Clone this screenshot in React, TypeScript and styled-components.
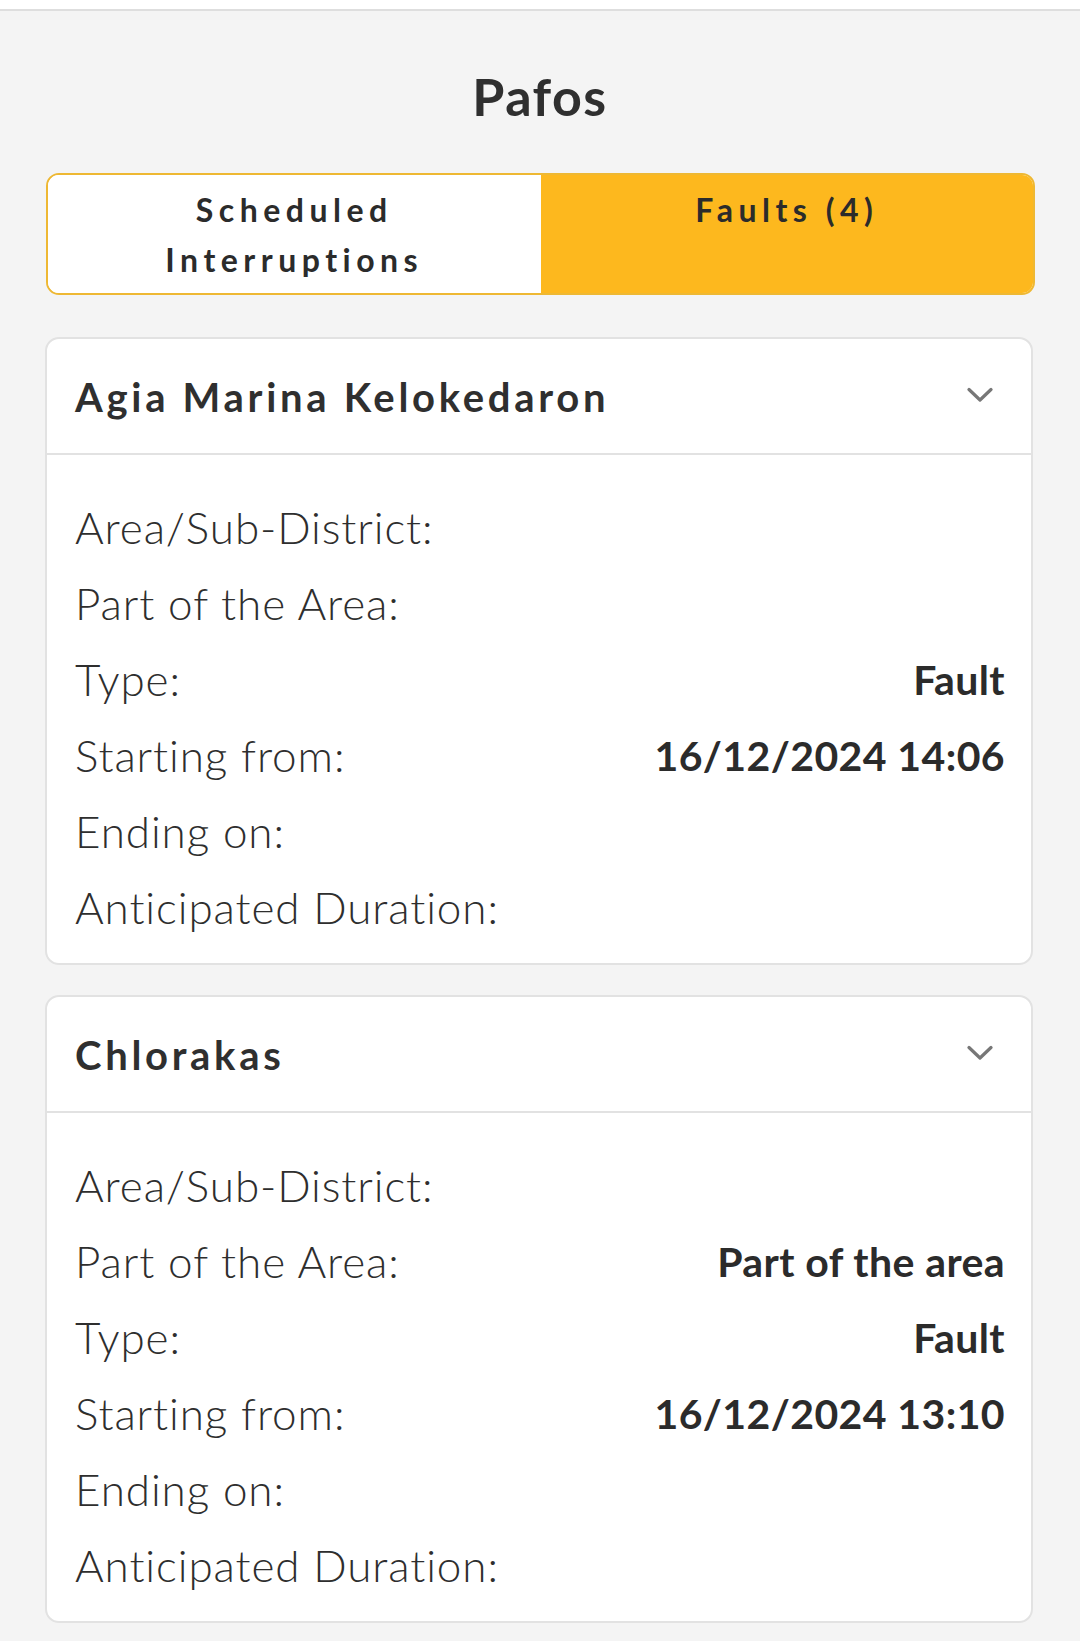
import React from "react";
import styled, { createGlobalStyle } from "styled-components";

const GlobalStyle = createGlobalStyle`
  html, body {
    margin: 0;
    padding: 0;
    background: #f4f4f4;
  }
  body {
    font-family: Lato, "Open Sans", sans-serif;
    color: #333333;
  }
`;

const Page = styled.div`
  width: 1080px;
  min-height: 1641px;
  background: #f4f4f4;
  display: flex;
  flex-direction: column;
`;

const TopStrip = styled.div`
  height: 9px;
  background: #ffffff;
  border-bottom: 2px solid #dedede;
`;

const Title = styled.h1`
  margin: 55px 0 47px;
  font-family: Lato, sans-serif;
  font-weight: 700;
  font-size: 52px;
  line-height: 60px;
  letter-spacing: 1.5px;
  text-align: center;
  color: #2f2f2f;
`;

const Tabs = styled.div`
  margin: 0 45px 0 46px;
  height: 122px;
  display: grid;
  grid-template-columns: 1fr 1fr;
  border: 2px solid #eeb833;
  border-radius: 13px;
  overflow: hidden;
  box-sizing: border-box;
  background: #ffffff;
`;

const Tab = styled.div<{ $active?: boolean }>`
  background: ${(p) => (p.$active ? "#fdb81e" : "#ffffff")};
  padding-top: 10px;
  text-align: center;
  font-family: Lato, sans-serif;
  font-weight: 700;
  font-size: 32px;
  line-height: 50px;
  letter-spacing: 5.5px;
  color: #2b2b2b;
`;

const List = styled.div`
  margin: 42px 47px 0 45px;
  display: flex;
  flex-direction: column;
  gap: 30px;
`;

const Card = styled.section`
  background: #ffffff;
  border: 2px solid #e2e2e2;
  border-radius: 14px;
  overflow: hidden;
`;

const CardHeader = styled.div`
  height: 116px;
  padding: 2px 38px 0 28px;
  box-sizing: border-box;
  display: flex;
  align-items: center;
  justify-content: space-between;
  border-bottom: 2px solid #e2e2e2;
`;

const CardTitle = styled.h2`
  margin: 0;
  font-family: Lato, sans-serif;
  font-weight: 700;
  font-size: 40px;
  line-height: 50px;
  letter-spacing: 3.7px;
  color: #2f2f2f;
`;

const Chevron = styled.svg`
  width: 26px;
  height: 16px;
  flex: none;
  margin-top: -4px;
`;

const CardBody = styled.div`
  padding: 34px 26px 18px 28px;
  display: flex;
  flex-direction: column;
`;

const Row = styled.div`
  height: 76px;
  display: flex;
  align-items: center;
  justify-content: space-between;
`;

const Label = styled.span`
  font-family: Lato, sans-serif;
  font-weight: 300;
  font-size: 44px;
  letter-spacing: 0.9px;
  color: #2e2e2e;
`;

const Value = styled.span`
  font-family: Lato, sans-serif;
  font-weight: 700;
  font-size: 41px;
  letter-spacing: 0.4px;
  color: #2b2b2b;
  text-align: right;
`;

type Item = {
  title: string;
  rows: { label: string; value?: string }[];
};

const items: Item[] = [
  {
    title: "Agia Marina Kelokedaron",
    rows: [
      { label: "Area/Sub-District:" },
      { label: "Part of the Area:" },
      { label: "Type:", value: "Fault" },
      { label: "Starting from:", value: "16/12/2024 14:06" },
      { label: "Ending on:" },
      { label: "Anticipated Duration:" },
    ],
  },
  {
    title: "Chlorakas",
    rows: [
      { label: "Area/Sub-District:" },
      { label: "Part of the Area:", value: "Part of the area" },
      { label: "Type:", value: "Fault" },
      { label: "Starting from:", value: "16/12/2024 13:10" },
      { label: "Ending on:" },
      { label: "Anticipated Duration:" },
    ],
  },
];

export default function App() {
  return (
    <>
      <GlobalStyle />
      <Page>
        <TopStrip />
        <Title>Pafos</Title>
        <Tabs>
          <Tab>
            Scheduled
            <br />
            Interruptions
          </Tab>
          <Tab $active>Faults (4)</Tab>
        </Tabs>
        <List>
          {items.map((item) => (
            <Card key={item.title}>
              <CardHeader>
                <CardTitle>{item.title}</CardTitle>
                <Chevron viewBox="0 0 26 16" fill="none">
                  <path
                    d="M2 2.5 L13 13 L24 2.5"
                    stroke="#777777"
                    strokeWidth="3.2"
                    strokeLinecap="round"
                    strokeLinejoin="round"
                  />
                </Chevron>
              </CardHeader>
              <CardBody>
                {item.rows.map((r) => (
                  <Row key={r.label}>
                    <Label>{r.label}</Label>
                    {r.value ? <Value>{r.value}</Value> : null}
                  </Row>
                ))}
              </CardBody>
            </Card>
          ))}
        </List>
      </Page>
    </>
  );
}
